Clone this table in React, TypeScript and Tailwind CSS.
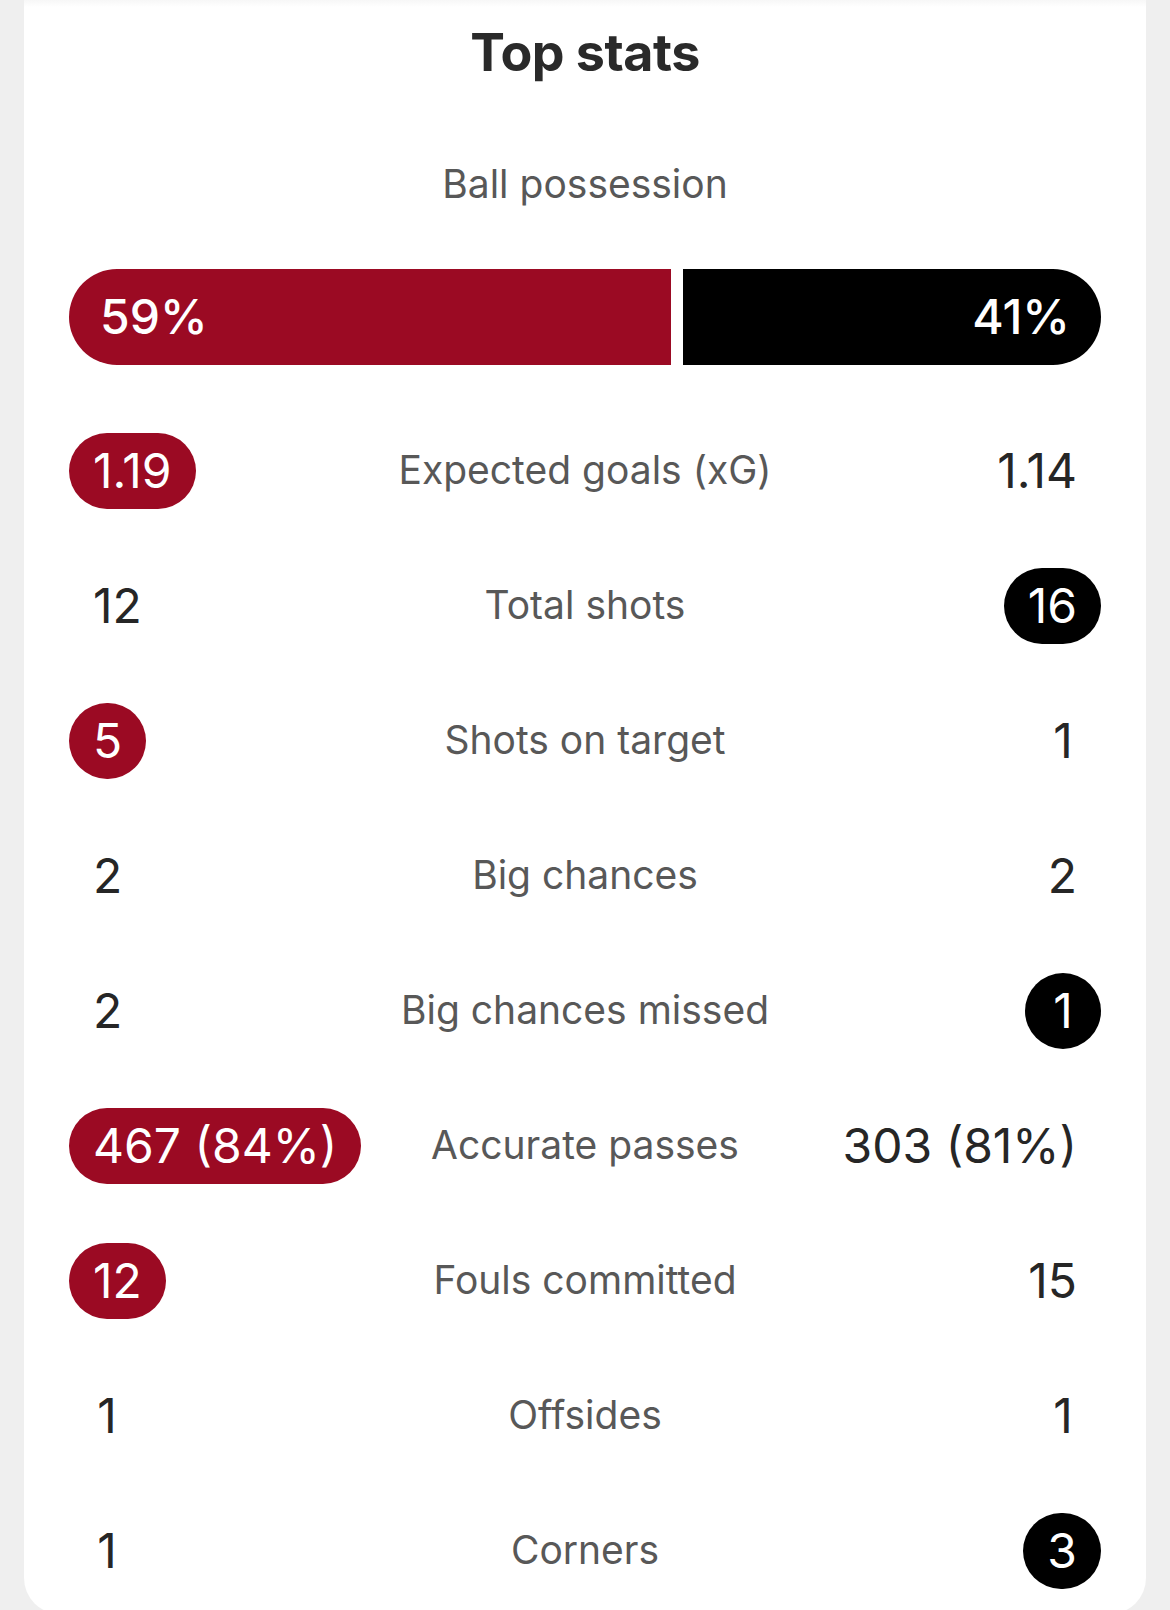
import type { ReactNode } from 'react'

type Side = 'home' | 'away' | null

interface StatRow {
  label: string
  home: string
  away: string
  lead: Side
}

const stats: StatRow[] = [
  { label: 'Expected goals (xG)', home: '1.19', away: '1.14', lead: 'home' },
  { label: 'Total shots', home: '12', away: '16', lead: 'away' },
  { label: 'Shots on target', home: '5', away: '1', lead: 'home' },
  { label: 'Big chances', home: '2', away: '2', lead: null },
  { label: 'Big chances missed', home: '2', away: '1', lead: 'away' },
  { label: 'Accurate passes', home: '467 (84%)', away: '303 (81%)', lead: 'home' },
  { label: 'Fouls committed', home: '12', away: '15', lead: 'home' },
  { label: 'Offsides', home: '1', away: '1', lead: null },
  { label: 'Corners', home: '1', away: '3', lead: 'away' },
]

const Value = ({ children, pill }: { children: ReactNode; pill?: 'red' | 'black' }) => {
  const base = 'inline-flex items-center justify-center h-[76px] min-w-[76px] px-[24px] rounded-full text-[48px] leading-none whitespace-nowrap'
  if (pill === 'red') return <span className={`${base} bg-[#9b0a23] text-white`}>{children}</span>
  if (pill === 'black') return <span className={`${base} bg-black text-white`}>{children}</span>
  return <span className={`${base} text-[#262626]`}>{children}</span>
}

export default function App() {
  const home = 59
  const away = 41

  return (
    <div
      className="h-[1610px] overflow-hidden bg-[#efefef] px-[24px]"
      style={{ fontFamily: 'Inter, "Noto Sans", "Liberation Sans", sans-serif' }}
    >
      <div className="bg-white rounded-b-[36px] h-[1614px] bg-gradient-to-b from-[#f7f7f7] via-white to-white bg-[length:100%_14px] bg-no-repeat">
        {/* Header */}
        <div className="pt-[20px] flex justify-center">
          <h2 className="text-[52px] font-bold tracking-[-0.5px] text-[#2a2a2a] leading-[66px]">Top stats</h2>
        </div>

        <div className="px-[45px]">
          {/* Possession */}
          <p className="mt-[78px] text-center text-[39px] text-[#585858] leading-none">Ball possession</p>

          <div className="mt-[66px] flex gap-[12px] h-[96px]">
            <div
              className="bg-[#9b0a23] rounded-l-full flex items-center pl-[31px] text-white text-[48px] font-medium"
              style={{ width: `${home}%` }}
            >
              {home}%
            </div>
            <div
              className="bg-black rounded-r-full flex items-center justify-end pr-[31px] text-white text-[48px] font-medium"
              style={{ width: `${away}%` }}
            >
              {away}%
            </div>
          </div>

          {/* Rows */}
          <div className="mt-[38px] flex flex-col">
            {stats.map((s) => (
              <div key={s.label} className="grid grid-cols-[1fr_auto_1fr] items-center h-[135px]">
                <div className="flex justify-start">
                  <Value pill={s.lead === 'home' ? 'red' : undefined}>{s.home}</Value>
                </div>
                <div className="text-[39px] text-[#585858] text-center whitespace-nowrap px-[16px]">{s.label}</div>
                <div className="flex justify-end">
                  <Value pill={s.lead === 'away' ? 'black' : undefined}>{s.away}</Value>
                </div>
              </div>
            ))}
          </div>
        </div>
      </div>
    </div>
  )
}
